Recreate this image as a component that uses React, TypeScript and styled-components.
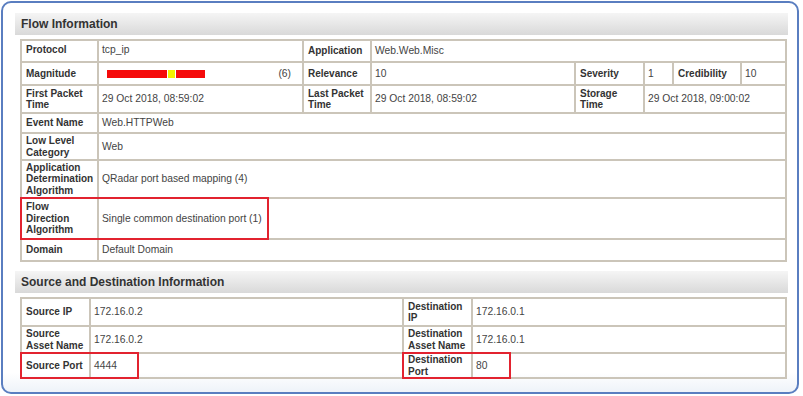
import * as React from 'react';
import styled, { createGlobalStyle } from 'styled-components';

const GlobalStyle = createGlobalStyle`
    html, body {
        margin: 0;
        padding: 0;
        background: #fff;
    }
    body {
        font-family: 'Liberation Sans', Arial, Helvetica, sans-serif;
    }
`;

const Frame = styled.div`
    box-sizing: border-box;
    width: 798px;
    height: 393px;
    margin: 1px 0 0 1px;
    padding: 10px 9px 0 12px;
    border: 2px solid #5a7ec0;
    border-radius: 10px;
    background: linear-gradient(to bottom, #fff 0, #fff 95%, #eef3f9 100%);
`;
const Section = styled.section`
    & + & {
        margin-top: 9px;
    }
`;
const SectionTitle = styled.div`
    height: 22px;
    line-height: 22px;
    padding-left: 6px;
    background: linear-gradient(to bottom, #f5f5f5, #d9d9d9);
    color: #333;
    font-size: 12px;
    font-weight: bold;
`;
const Table = styled.table`
    table-layout: fixed;
    border-collapse: collapse;
    width: 765px;
    margin: 4px 0 0 5px;
    font-size: 10px;
    line-height: 11.5px;
`;
const Row = styled.tr<{ $h: number }>`
    height: ${p => p.$h}px;
`;
const Label = styled.th<{ $top?: boolean }>`
    position: relative;
    border: 2px solid #cbc5b9;
    padding: ${p => (p.$top ? '3px' : '0')} 3px 0 4px;
    text-align: left;
    vertical-align: ${p => (p.$top ? 'top' : 'middle')};
    font-weight: bold;
    color: #333;
`;
const Value = styled.td<{ $top?: boolean }>`
    border: 2px solid #cbc5b9;
    padding: ${p => (p.$top ? '3px' : '0')} 3px 0 3px;
    vertical-align: ${p => (p.$top ? 'top' : 'middle')};
    color: #444;
    font-size: 10.3px;
`;
const Highlight = styled.span<{ $w: number }>`
    position: absolute;
    box-sizing: border-box;
    left: -2px;
    top: -2px;
    bottom: -2px;
    width: ${p => p.$w}px;
    border: 2px solid #e2232f;
    pointer-events: none;
`;
const Magnitude = styled.div`
    display: flex;
    align-items: center;
    justify-content: space-between;
    padding: 0 8px 0 5px;
`;
const Bar = styled.div`
    display: flex;
    gap: 1px;
    height: 8px;
`;
const Segment = styled.span<{ $w: number; $c: string }>`
    width: ${p => p.$w}px;
    background: ${p => p.$c};
`;

const magnitude = [
    { w: 60, c: '#f50a0a' },
    { w: 7, c: '#f3f000' },
    { w: 29, c: '#f50a0a' },
];

const sourceRows = [
    { h: 28, src: 'Source IP', srcVal: '172.16.0.2', dst: 'Destination IP', dstVal: '172.16.0.1' },
    { h: 27, src: 'Source Asset Name', srcVal: '172.16.0.2', dst: 'Destination Asset Name', dstVal: '172.16.0.1' },
    { h: 25, src: 'Source Port', srcVal: '4444', dst: 'Destination Port', dstVal: '80', mark: true },
];

const App: React.FunctionComponent = () => (
    <>
        <GlobalStyle />
        <Frame>
            <Section>
                <SectionTitle>Flow Information</SectionTitle>
                <Table>
                    <colgroup>
                        <col style={{ width: 77 }} />
                        <col style={{ width: 205 }} />
                        <col style={{ width: 68 }} />
                        <col style={{ width: 204 }} />
                        <col style={{ width: 69 }} />
                        <col style={{ width: 29 }} />
                        <col style={{ width: 68 }} />
                        <col style={{ width: 45 }} />
                    </colgroup>
                    <tbody>
                        <Row $h={22}>
                            <Label $top>Protocol</Label>
                            <Value $top>tcp_ip</Value>
                            <Label>Application</Label>
                            <Value colSpan={5}>Web.Web.Misc</Value>
                        </Row>
                        <Row $h={23}>
                            <Label>Magnitude</Label>
                            <Value>
                                <Magnitude>
                                    <Bar>
                                        {magnitude.map((s, i) => (
                                            <Segment key={i} $w={s.w} $c={s.c} />
                                        ))}
                                    </Bar>
                                    <span>(6)</span>
                                </Magnitude>
                            </Value>
                            <Label>Relevance</Label>
                            <Value>10</Value>
                            <Label>Severity</Label>
                            <Value>1</Value>
                            <Label>Credibility</Label>
                            <Value>10</Value>
                        </Row>
                        <Row $h={28}>
                            <Label>First Packet Time</Label>
                            <Value>29 Oct 2018, 08:59:02</Value>
                            <Label>Last Packet Time</Label>
                            <Value>29 Oct 2018, 08:59:02</Value>
                            <Label>Storage Time</Label>
                            <Value colSpan={3}>29 Oct 2018, 09:00:02</Value>
                        </Row>
                        <Row $h={20}>
                            <Label>Event Name</Label>
                            <Value colSpan={7}>Web.HTTPWeb</Value>
                        </Row>
                        <Row $h={27}>
                            <Label>Low Level Category</Label>
                            <Value colSpan={7}>Web</Value>
                        </Row>
                        <Row $h={38}>
                            <Label>Application Determination Algorithm</Label>
                            <Value colSpan={7}>QRadar port based mapping (4)</Value>
                        </Row>
                        <Row $h={41}>
                            <Label>
                                Flow Direction Algorithm
                                <Highlight $w={249} />
                            </Label>
                            <Value colSpan={7}>Single common destination port (1)</Value>
                        </Row>
                        <Row $h={22}>
                            <Label>Domain</Label>
                            <Value colSpan={7}>Default Domain</Value>
                        </Row>
                    </tbody>
                </Table>
            </Section>
            <Section>
                <SectionTitle>Source and Destination Information</SectionTitle>
                <Table>
                    <colgroup>
                        <col style={{ width: 69 }} />
                        <col style={{ width: 313 }} />
                        <col style={{ width: 69 }} />
                        <col style={{ width: 314 }} />
                    </colgroup>
                    <tbody>
                        {sourceRows.map(r => (
                            <Row key={r.src} $h={r.h}>
                                <Label>
                                    {r.src}
                                    {r.mark && <Highlight $w={119} />}
                                </Label>
                                <Value>{r.srcVal}</Value>
                                <Label>
                                    {r.dst}
                                    {r.mark && <Highlight $w={109} />}
                                </Label>
                                <Value>{r.dstVal}</Value>
                            </Row>
                        ))}
                    </tbody>
                </Table>
            </Section>
        </Frame>
    </>
);

export default App;
